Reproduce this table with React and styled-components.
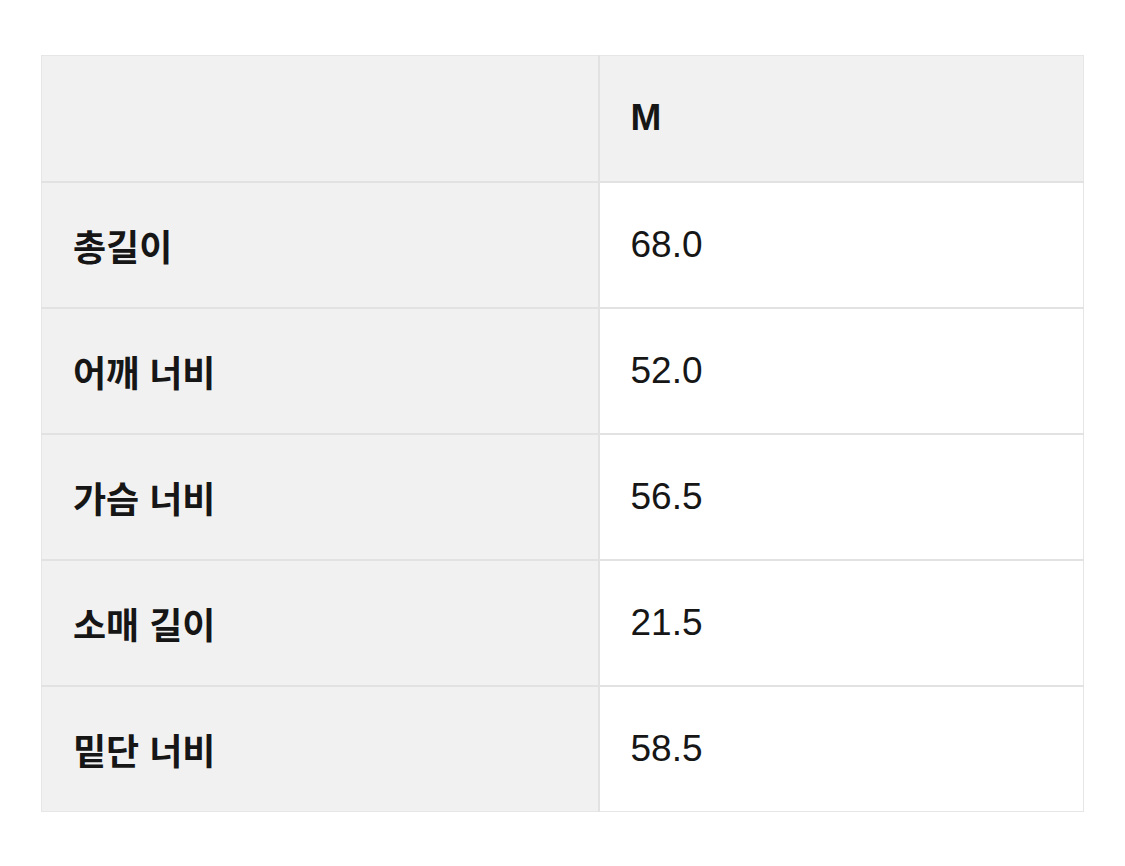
import React from 'react';
import styled, { createGlobalStyle } from 'styled-components';

const GlobalStyle = createGlobalStyle`
    html, body {
        margin: 0;
        padding: 0;
        background: #ffffff;
    }
    body {
        font-family: "Liberation Sans", "Noto Sans CJK KR", sans-serif;
        color: #1a1a1a;
    }
`;

const Page = styled.div`
    padding: 55px 41px 0 41px;
    width: 1043px;
`;

const SizeTable = styled.table`
    width: 1043px;
    border-collapse: collapse;
    table-layout: fixed;
    border: 1px solid #e6e6e6;
    col.label {
        width: 557px;
    }
`;

const Row = styled.tr`
    height: 126px;
    border-top: 2px solid #e2e2e2;
    &:first-child {
        border-top: none;
    }
`;

const Cell = styled.td`
    padding: 0 0 0 31px;
    background: ${p => (p.$shaded ? '#f1f1f1' : '#ffffff')};
    border-right: ${p => (p.$label ? '2px solid #e2e2e2' : 'none')};
    font-size: ${p => (p.$label ? '36px' : '37px')};
    font-weight: ${p => (p.$bold ? 700 : 400)};
    vertical-align: middle;
    white-space: nowrap;
    color: #161616;
`;

const rows = [
    ['총길이', '68.0'],
    ['어깨 너비', '52.0'],
    ['가슴 너비', '56.5'],
    ['소매 길이', '21.5'],
    ['밑단 너비', '58.5'],
];

const App = () => {
    return (
        <>
            <GlobalStyle />
            <Page>
                <SizeTable>
                    <colgroup>
                        <col className="label" />
                        <col />
                    </colgroup>
                    <tbody>
                        <Row>
                            <Cell $label $shaded />
                            <Cell $shaded $bold>M</Cell>
                        </Row>
                        {rows.map(([name, value]) => (
                            <Row key={name}>
                                <Cell $label $shaded $bold>{name}</Cell>
                                <Cell>{value}</Cell>
                            </Row>
                        ))}
                    </tbody>
                </SizeTable>
            </Page>
        </>
    );
};

export default App;
